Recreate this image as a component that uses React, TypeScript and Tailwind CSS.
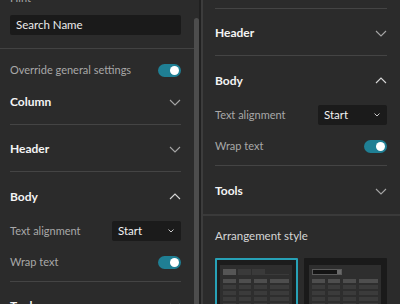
import React from 'react';

function Chevron({ up = false }: { up?: boolean }) {
  return (
    <svg width="12" height="7" viewBox="0 0 12 7" className="shrink-0">
      <polyline
        points={up ? '1,6 6,1 11,6' : '1,1 6,6 11,1'}
        fill="none"
        stroke={up ? '#d8d8d8' : '#a6a6a6'}
        strokeWidth="1.1"
      />
    </svg>
  );
}

function Toggle() {
  return (
    <div className="flex h-[13px] w-[23px] shrink-0 items-center justify-end rounded-full bg-[#1f7f94] pr-[2px]">
      <div className="h-[9px] w-[9px] rounded-full bg-white" />
    </div>
  );
}

function Select({ value }: { value: string }) {
  return (
    <div className="flex h-[20px] w-[69px] items-center justify-between rounded-[2px] bg-[#1b1b1b] pl-[6px] pr-[7px]">
      <span className="text-[11.5px] text-[#f2f2f2]">{value}</span>
      <svg width="6" height="4" viewBox="0 0 6 4">
        <polyline points="0.5,0.5 3,3 5.5,0.5" fill="none" stroke="#c8c8c8" strokeWidth="1" />
      </svg>
    </div>
  );
}

// accordion header row
function SectionRow({ title, open = false, border = true }: { title: string; open?: boolean; border?: boolean }) {
  return (
    <div
      className={`flex h-[47px] items-center justify-between pt-[2px] ${border ? 'border-b border-[#444444]' : ''}`}
    >
      <span className="text-[12px] font-bold text-[#f4f4f4]">{title}</span>
      <Chevron up={open} />
    </div>
  );
}

function BodyOptions() {
  return (
    <div className="border-b border-[#444444] pb-[9px]">
      <div className="mt-[2px] flex items-center justify-between">
        <span className="text-[11px] text-[#a8a8a8]">Text alignment</span>
        <Select value="Start" />
      </div>
      <div className="mt-[11px] flex h-[20px] items-center justify-between">
        <span className="text-[11px] text-[#a8a8a8]">Wrap text</span>
        <Toggle />
      </div>
    </div>
  );
}

function TableLines() {
  const rows = [0, 1, 2, 3, 4];
  return (
    <div className="mt-[4px] flex flex-col gap-[2px]">
      {rows.map((r) => (
        <div key={r} className="flex h-[4px] gap-[3px]">
          <div className={`w-[13px] ${r === 0 ? 'bg-[#4e4e4e]' : 'bg-[#3b3b3b]'}`} />
          <div className={`w-[13px] ${r === 0 ? 'bg-[#4e4e4e]' : 'bg-[#3b3b3b]'}`} />
          <div className={`w-[13px] ${r === 0 ? 'bg-[#4e4e4e]' : 'bg-[#3b3b3b]'}`} />
          <div className={`w-[20px] ${r === 0 ? 'bg-[#4e4e4e]' : 'bg-[#3b3b3b]'}`} />
        </div>
      ))}
    </div>
  );
}

function ThumbTabs() {
  return (
    <div className="overflow-hidden rounded-[1px] border-2 border-[#27a1b6] bg-[#1c1c1c] pl-[3px] pr-[4px] pt-[5px]">
      <div className="h-[60px] bg-[#2e2e2e] px-[3px] pt-[4px]">
        <div className="flex h-[6px] items-end">
          <div className="h-[6px] w-[13px] bg-[#565656]" />
          <div className="ml-[2px] h-[6px] w-[13px] bg-[#3a3a3a]" />
          <div className="ml-[1px] h-[6px] w-[13px] bg-[#3a3a3a]" />
          <div className="h-px flex-1 bg-[#3a3a3a]" />
        </div>
        <TableLines />
      </div>
    </div>
  );
}

function ThumbSearch() {
  return (
    <div className="overflow-hidden rounded-[1px] border-2 border-[#1a1a1a] bg-[#1a1a1a] pl-[3px] pr-[4px] pt-[5px]">
      <div className="h-[60px] bg-[#2e2e2e] px-[3px] pt-[4px]">
        <div className="flex h-[6px] w-[30px] items-center border border-[#5a5a5a] bg-[#141414]">
          <div className="flex-1" />
          <div className="h-[4px] w-[4px] bg-[#6a6a6a]" />
        </div>
        <TableLines />
      </div>
    </div>
  );
}

export default function App() {
  return (
    <div className="flex h-[304px] w-[400px] overflow-hidden bg-[#2b2b2b] font-['Lato','Open_Sans',sans-serif]">
      {/* Left settings panel (scrolled) */}
      <div className="w-[194px] shrink-0 overflow-hidden">
        <div className="-mt-[10px]">
          <div className="pl-[10px] pr-[13px]">
            <div className="h-[16px] text-[11px] leading-[16px] text-[#a8a8a8]">Hint</div>
            <div className="mt-[9px] flex h-[20px] items-center rounded-[2px] bg-[#1a1a1a] px-[6px] text-[11.5px] text-[#ececec]">
              Search Name
            </div>
          </div>
          <div className="mt-[13px] h-px bg-[#424242]" />
          <div className="pl-[10px] pr-[13px]">
            <div className="h-[29px] pt-[13px]">
              <div className="flex h-[16px] items-center justify-between">
                <span className="text-[11px] text-[#a8a8a8]">Override general settings</span>
                <Toggle />
              </div>
            </div>
            <SectionRow title="Column" />
            <SectionRow title="Header" />
            <SectionRow title="Body" open border={false} />
            <BodyOptions />
            <SectionRow title="Tools" />
          </div>
        </div>
      </div>

      {/* scrollbar */}
      <div className="w-[5px] shrink-0 pt-[18px]">
        <div className="h-full rounded-t-full bg-[#4d4d4d]" />
      </div>
      <div className="w-[2px] shrink-0 bg-[#202020]" />
      <div className="w-[2px] shrink-0 bg-[#3c3c3c]" />

      {/* Right settings panel */}
      <div className="flex-1 overflow-hidden">
        <div className="pl-[12px] pr-[13px]">
          <div className="h-[9px] border-b border-[#444444]" />
          <SectionRow title="Header" />
          <SectionRow title="Body" open border={false} />
          <BodyOptions />
          <div className="flex h-[48px] items-center justify-between pt-[2px]">
            <span className="text-[12px] font-bold text-[#f4f4f4]">Tools</span>
            <Chevron />
          </div>
        </div>
        <div className="h-[2px] bg-[#3a3a3a]" />
        <div className="pl-[12px] pr-[13px]">
          <div className="flex h-[28px] items-end">
            <span className="text-[11.5px] leading-[16px] text-[#d6d6d6]">Arrangement style</span>
          </div>
          <div className="mt-[14px] grid grid-cols-2 gap-[6px]">
            <ThumbTabs />
            <ThumbSearch />
          </div>
        </div>
      </div>
    </div>
  );
}
